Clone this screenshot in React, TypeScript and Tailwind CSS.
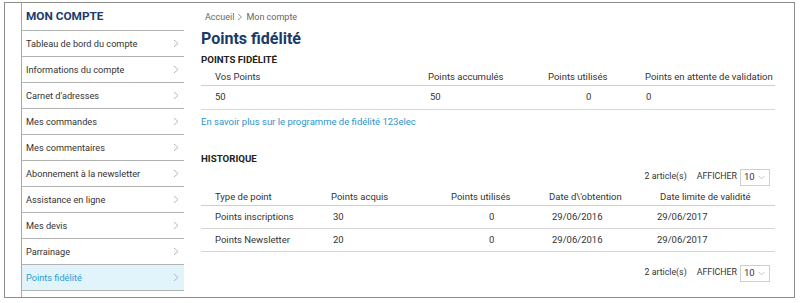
import React from "react";

const Chev = ({ className = "" }: { className?: string }) => (
  <svg width="6" height="9" viewBox="0 0 6 9" className={className}>
    <polyline points="1,1 5,4.5 1,8" fill="none" stroke="#b8b8b8" strokeWidth="1" />
  </svg>
);

const items = [
  "Tableau de bord du compte",
  "Informations du compte",
  "Carnet d'adresses",
  "Mes commandes",
  "Mes commentaires",
  "Abonnement à la newsletter",
  "Assistance en ligne",
  "Mes devis",
  "Parrainage",
  "Points fidélité",
];

const Select = () => (
  <div className="ml-[3px] flex h-[17px] w-[30px] items-center justify-between border border-[#cfcfcf] bg-white pl-[3px] pr-[4px] text-[9.5px] text-[#333]">
    <span>10</span>
    <svg width="7" height="5" viewBox="0 0 7 5">
      <polyline points="0.5,0.8 3.5,3.8 6.5,0.8" fill="none" stroke="#c4c4c4" strokeWidth="1" />
    </svg>
  </div>
);

const Pager = () => (
  <div className="flex h-[18px] items-center justify-end pr-[5px] text-[8.8px] text-[#333]">
    <span>2 article(s)</span>
    <span className="ml-[10px] text-[#333]">AFFICHER</span>
    <Select />
  </div>
);

export default function App() {
  return (
    <div
      className="h-[303px] w-[800px] bg-white pl-[4px] pt-[2px]"
      style={{ fontFamily: "Roboto, 'Liberation Sans', sans-serif" }}
    >
      <div className="flex h-[296px] w-[791px] border border-[#8c8c8c] pl-[16px]">
        {/* Sidebar */}
        <div className="flex w-[163px] flex-col border-l border-[#a9a9a9]">
          <div className="flex h-[28px] items-center border-b border-[#b3b3b3] pl-[4px] pt-[1px] text-[11.8px] font-bold text-[#1c3a6b]">
            MON COMPTE
          </div>
          {items.map((it, i) => {
            const active = i === items.length - 1;
            return (
              <div
                key={it}
                className={`flex h-[26px] items-center justify-between border-b border-[#b3b3b3] pl-[4px] pr-[5px] text-[9.2px] ${
                  active ? "bg-[#e1f4fc] text-[#2d9bd0]" : "text-[#333]"
                }`}
              >
                <span>{it}</span>
                <Chev />
              </div>
            );
          })}
        </div>

        {/* Main */}
        <div className="ml-[17px] flex w-[574px] flex-col">
          <div className="mt-[8px] flex items-center pl-[4px] text-[9px] leading-[12px] text-[#666]">
            <span>Accueil</span>
            <svg width="6" height="8" viewBox="0 0 6 8" className="mx-[3px]">
              <polyline points="1,1 4.5,4 1,7" fill="none" stroke="#888" strokeWidth="0.9" />
            </svg>
            <span>Mon compte</span>
          </div>
          <div className="mt-[6px] text-[16px] font-bold leading-[20px] text-[#1b3a68]">Points fidélité</div>
          <div className="mt-[5px] text-[9.7px] font-bold leading-[12px] text-[#222]">POINTS FIDÉLITÉ</div>

          {/* Points table */}
          <div className="mt-[3px] grid grid-cols-[224px_115px_102px_133px] border-b border-[#cfcfcf] text-[9.5px] leading-[16px] text-[#333]">
            <div className="pl-[14px]">Vos Points</div>
            <div className="pl-[3px]">Points accumulés</div>
            <div className="pl-[8px]">Points utilisés</div>
            <div className="pl-[3px]">Points en attente de validation</div>
          </div>
          <div className="grid h-[24px] grid-cols-[224px_115px_102px_133px] items-center border-b border-[#d6d6d6] text-[9.5px] text-[#333]">
            <div className="pl-[14px]">50</div>
            <div className="pl-[5px]">50</div>
            <div className="pl-[46px]">0</div>
            <div className="pl-[4px]">0</div>
          </div>
          <div className="mt-[5px] text-[9.5px] leading-[13px] text-[#2b95cc]">
            En savoir plus sur le programme de fidélité 123elec
          </div>

          <div className="mt-[25px] text-[9.7px] font-bold leading-[12px] text-[#222]">HISTORIQUE</div>
          <div className="mt-[3px]">
            <Pager />
          </div>

          {/* History table */}
          <div className="mt-[3px] grid grid-cols-[125px_114px_96px_114px_125px] border-b border-[#cfcfcf] text-[9.5px] leading-[16px] text-[#333]">
            <div className="pl-[14px]">Type de point</div>
            <div className="pl-[5px]">Points acquis</div>
            <div className="pl-[11px]">Points utilisés</div>
            <div className="pl-[13px]">Date d\'obtention</div>
            <div className="pl-[10px]">Date limite de validité</div>
          </div>
          {[
            ["Points inscriptions", "30"],
            ["Points Newsletter", "20"],
          ].map(([a, b]) => (
            <div
              key={a}
              className="grid h-[23px] grid-cols-[125px_114px_96px_114px_125px] items-center border-b border-[#d6d6d6] text-[9.5px] text-[#333]"
            >
              <div className="pl-[14px]">{a}</div>
              <div className="pl-[7px]">{b}</div>
              <div className="pl-[49px]">0</div>
              <div className="pl-[16px]">29/06/2016</div>
              <div className="pl-[7px]">29/06/2017</div>
            </div>
          ))}
          <div className="mt-[12px]">
            <Pager />
          </div>
        </div>
      </div>
    </div>
  );
}
